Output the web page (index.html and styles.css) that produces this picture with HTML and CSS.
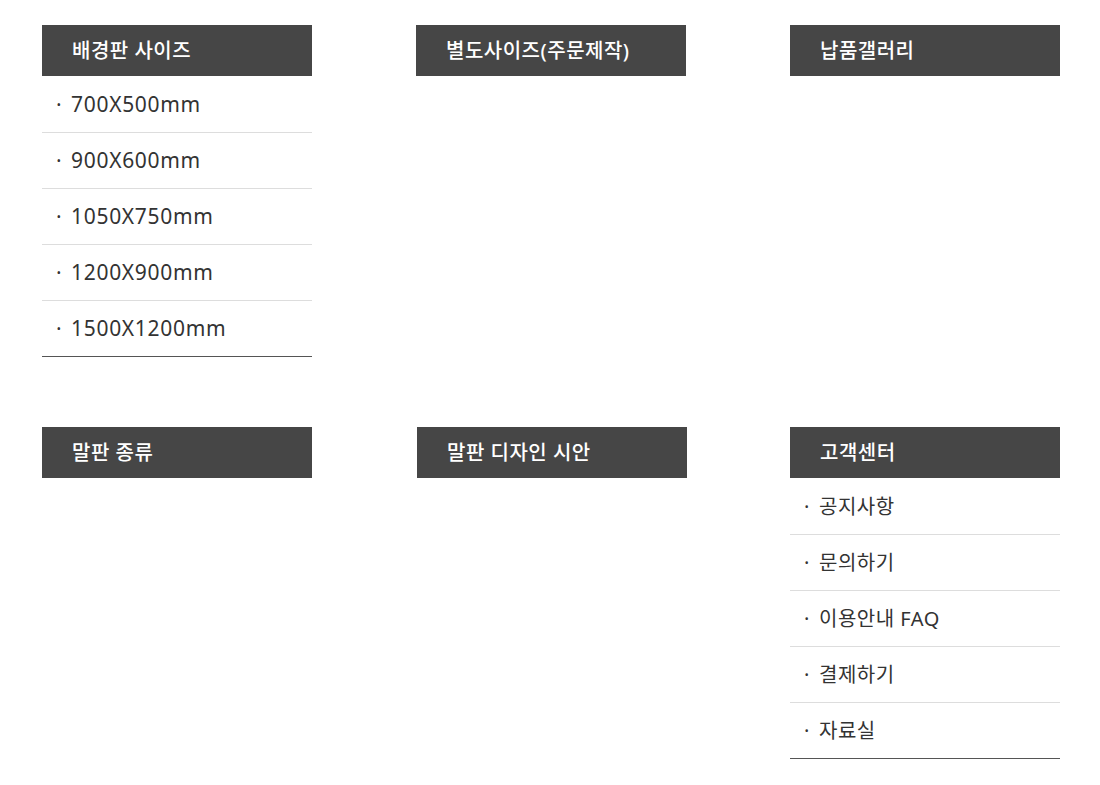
FILE: index.html
```html
<!DOCTYPE html>
<html lang="ko">

<head>
    <meta charset="utf-8">
    <title>메뉴</title>
    <link rel="stylesheet" href="styles.css">
</head>

<body>
    <div class="menu-grid">
        <div class="menu-box">
            <h2 class="menu-title">배경판 사이즈</h2>
            <ul class="menu-list sizes">
                <li>700X500mm</li>
                <li>900X600mm</li>
                <li>1050X750mm</li>
                <li>1200X900mm</li>
                <li>1500X1200mm</li>
            </ul>
        </div>
        <div class="menu-box">
            <h2 class="menu-title">별도사이즈(주문제작)</h2>
        </div>
        <div class="menu-box">
            <h2 class="menu-title">납품갤러리</h2>
        </div>

        <div class="menu-box">
            <h2 class="menu-title">말판 종류</h2>
        </div>
        <div class="menu-box shift">
            <h2 class="menu-title">말판 디자인 시안</h2>
        </div>
        <div class="menu-box">
            <h2 class="menu-title">고객센터</h2>
            <ul class="menu-list">
                <li>공지사항</li>
                <li>문의하기</li>
                <li>이용안내 FAQ</li>
                <li>결제하기</li>
                <li>자료실</li>
            </ul>
        </div>
    </div>
</body>

</html>
```

FILE: styles.css
```css
/* Menu boxes */
body {
    margin: 0;
    background: #fff;
    font-family: "Noto Sans", "Noto Sans CJK KR", sans-serif;
}

.menu-grid {
    display: grid;
    grid-template-columns: 270px 270px 270px;
    column-gap: 104px;
    row-gap: 70px;
    align-items: start;
    padding: 25px 0 0 42px;
}

.menu-box.shift {
    margin-left: 1px;
    margin-right: -1px;
}

.menu-title {
    margin: 0;
    height: 51px;
    line-height: 51px;
    padding-left: 30px;
    background-color: #464646;
    color: #fff;
    font-size: 20px;
    font-weight: 500;
    letter-spacing: 0.5px;
}

.menu-list {
    margin: 0;
    padding: 1px 0 0;
    list-style: none;
    border-bottom: 1px solid #555;
}

.menu-list li {
    height: 55px;
    line-height: 55px;
    padding-left: 14px;
    border-bottom: 1px solid #ddd;
    color: #333;
    font-size: 20px;
    letter-spacing: 0.5px;
}

.menu-list.sizes li {
    font-size: 21px;
    letter-spacing: 0.7px;
}

.menu-list li:last-child {
    border-bottom: none;
}

.menu-list li:before {
    content: "·";
    display: inline-block;
    width: 15px;
    letter-spacing: 0;
}
```
